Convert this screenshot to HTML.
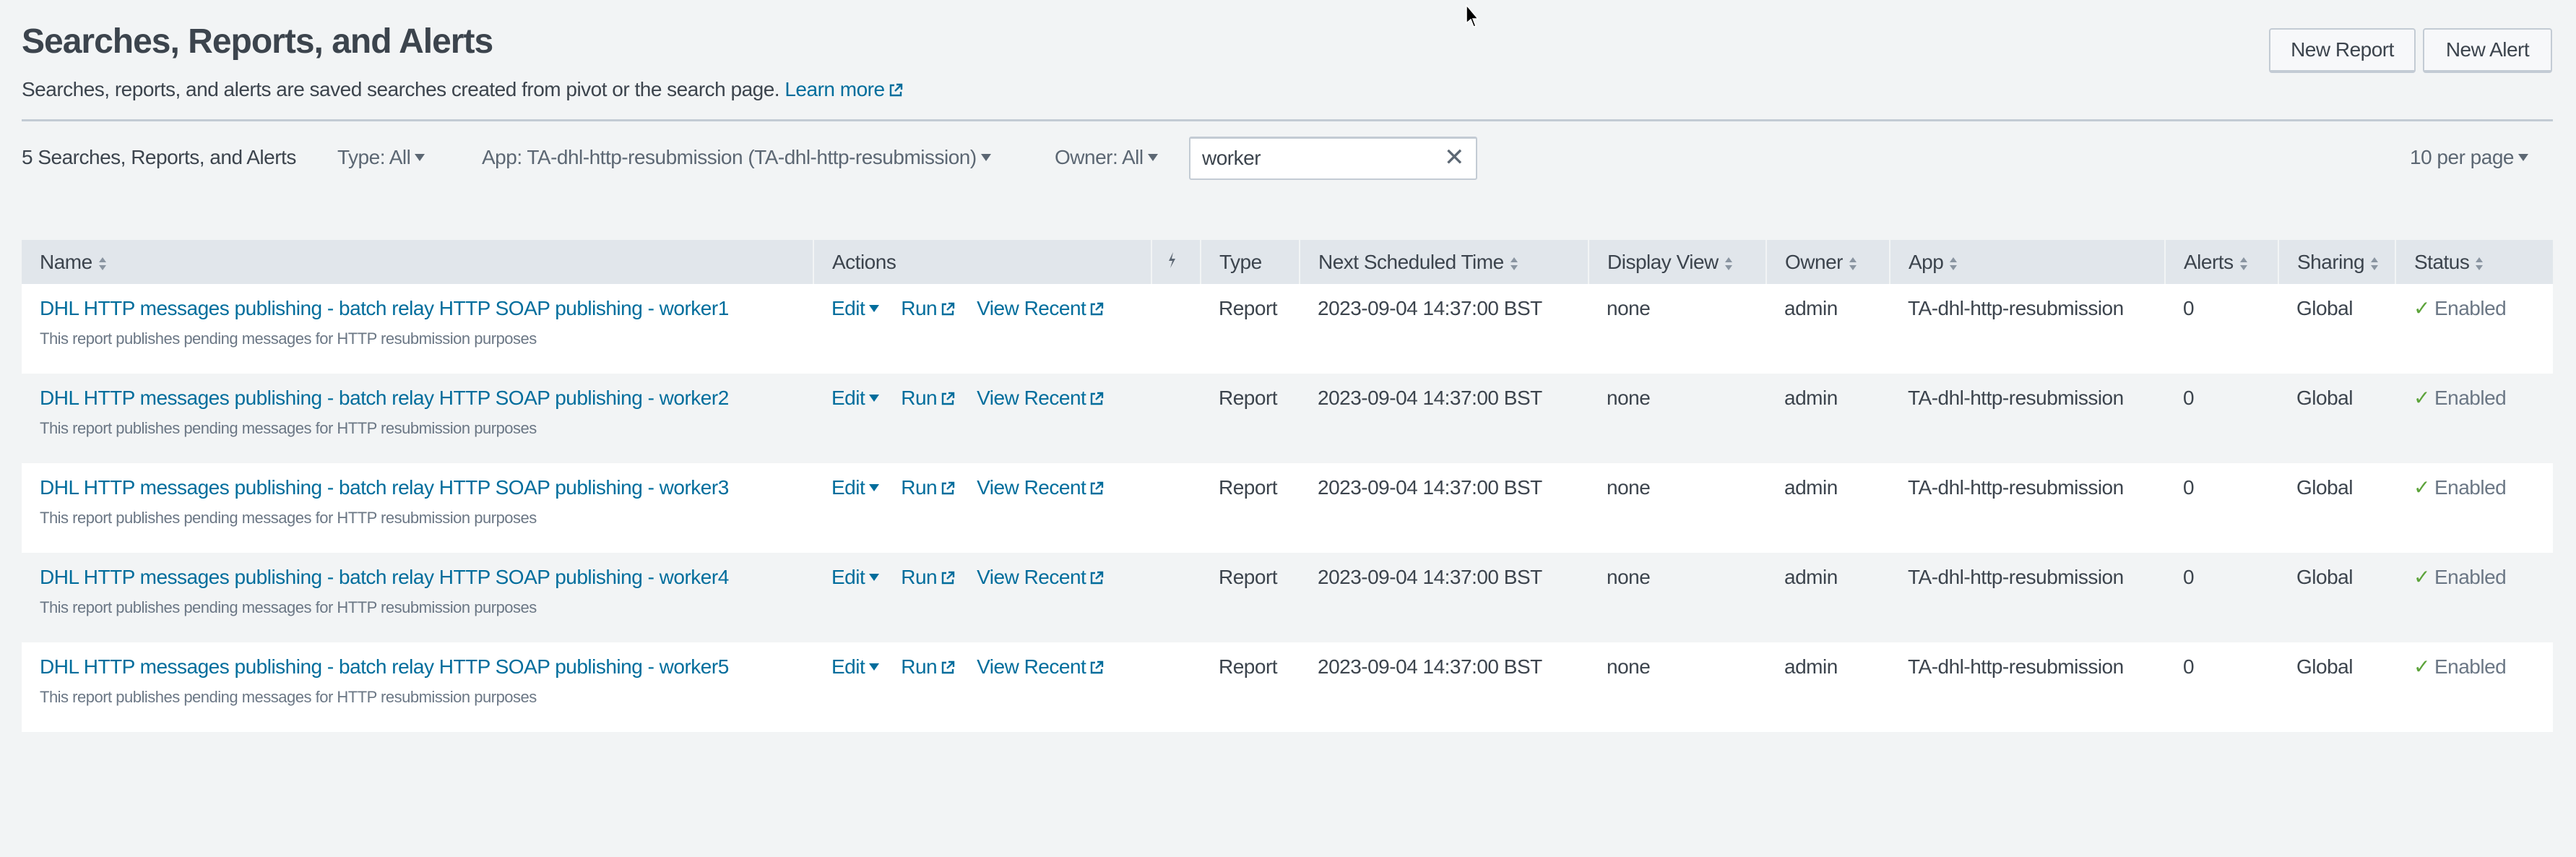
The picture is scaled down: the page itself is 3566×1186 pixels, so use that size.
<!DOCTYPE html>
<html><head><meta charset="utf-8"><style>
*{box-sizing:border-box;margin:0;padding:0}
body{width:3566px;height:1186px;background:#f2f4f5;font-family:"Liberation Sans",sans-serif;color:#3c444d;position:relative;overflow:hidden;font-size:28px;letter-spacing:-0.5px}
.abs{position:absolute;white-space:nowrap}
h1{position:absolute;left:30px;top:30px;font-size:48px;font-weight:bold;color:#3c444d;letter-spacing:-1px}
a{color:#006d9c;text-decoration:none}
.ext{display:inline-block;width:20px;height:20px;vertical-align:-2px;margin-left:5px}
.btn{position:absolute;top:39px;height:62px;border:2px solid #c3cbd4;border-bottom-width:4px;border-radius:4px;background:#f7f8fa;font-size:28px;color:#3c444d;line-height:56px;text-align:center}
.caret{display:inline-block;width:0;height:0;border-left:7px solid transparent;border-right:7px solid transparent;border-top:10px solid currentColor;vertical-align:4px;margin-left:6px}
table{position:absolute;left:30px;top:332px;width:3504px;border-collapse:collapse;table-layout:fixed}
th{background:#e1e6eb;height:61px;text-align:left;font-weight:normal;padding-left:25px;border-left:2px solid #f2f4f5;font-size:28px;color:#3c444d}
th:first-child{border-left:none}
td{height:124px;vertical-align:top;padding:18px 0 0 25px;line-height:32px;white-space:nowrap}
tr.w td{background:#fff}
tr.g td{background:#f2f4f5}
.desc{font-size:22px;color:#6b7785;margin-top:10px;display:block}
.sort{display:inline-block;width:12px;height:20px;vertical-align:-3px;margin-left:8px}
.act a{margin-right:30px}
.ok{color:#5ca33a;font-size:28px;margin-right:6px}
.en{color:#6b7785}
</style></head><body>
<svg width="0" height="0" style="position:absolute"><defs>
<symbol id="ex" viewBox="0 0 20 20"><path d="M8 3H3v14h14v-5" fill="none" stroke="currentColor" stroke-width="2.4"/><path d="M11 2h7v7M18 2L9 11" fill="none" stroke="currentColor" stroke-width="2.4"/></symbol>
<symbol id="so" viewBox="0 0 12 20"><path d="M6 1L11 8H1z M6 19L11 12H1z" fill="#8a95a1"/></symbol>
</defs></svg>
<h1>Searches, Reports, and Alerts</h1>
<div class="abs" style="left:30px;top:108px;font-size:28px">Searches, reports, and alerts are saved searches created from pivot or the search page. <a href="#">Learn more<svg class="ext"><use href="#ex"/></svg></a></div>
<div class="btn" style="left:3141px;width:203px">New Report</div>
<div class="btn" style="left:3354px;width:179px">New Alert</div>
<div class="abs" style="left:30px;top:165px;width:3504px;height:3px;background:#c3cbd4"></div>
<div class="abs" style="left:30px;top:202px">5 Searches, Reports, and Alerts</div>
<div class="abs" style="left:467px;top:202px;color:#5c6773">Type: All<span class="caret"></span></div>
<div class="abs" style="left:667px;top:202px;color:#5c6773">App: TA-dhl-http-resubmission (TA-dhl-http-resubmission)<span class="caret"></span></div>
<div class="abs" style="left:1460px;top:202px;color:#5c6773">Owner: All<span class="caret"></span></div>
<div class="abs" style="left:1646px;top:189px;width:399px;height:60px;background:#fff;border:2px solid #c3cbd4;border-top-width:3px;border-radius:3px;padding:11px 0 0 16px;color:#3c444d">worker<span style="position:absolute;right:16px;top:6px;font-size:34px;color:#5c6773">✕</span></div>
<div class="abs" style="left:3336px;top:202px;color:#5c6773">10 per page<span class="caret"></span></div>
<div class="abs" style="left:2029px;top:6px;width:0;height:0;border-left:0 solid transparent;"></div>
<svg class="abs" style="left:2028px;top:6px" width="20" height="34" viewBox="0 0 20 34"><path d="M2 1L2 26L8 21L12 31L15 30L11 20L18 20Z" fill="#000" stroke="#fff" stroke-width="1.5"/></svg>
<table>
<colgroup><col style="width:1096px"><col style="width:468px"><col style="width:68px"><col style="width:137px"><col style="width:400px"><col style="width:246px"><col style="width:171px"><col style="width:381px"><col style="width:157px"><col style="width:162px"><col style="width:218px"></colgroup>
<tr><th>Name<svg class="sort"><use href="#so"/></svg></th><th>Actions</th><th style="padding-left:20px"><svg width="14" height="24" viewBox="0 0 14 24"><path d="M9 1L3 13h5L5 23l7-13H7z" fill="#5c6773"/></svg></th><th>Type</th><th>Next Scheduled Time<svg class="sort"><use href="#so"/></svg></th><th>Display View<svg class="sort"><use href="#so"/></svg></th><th>Owner<svg class="sort"><use href="#so"/></svg></th><th>App<svg class="sort"><use href="#so"/></svg></th><th>Alerts<svg class="sort"><use href="#so"/></svg></th><th>Sharing<svg class="sort"><use href="#so"/></svg></th><th>Status<svg class="sort"><use href="#so"/></svg></th></tr>
<tr class="w"><td><a href="#">DHL HTTP messages publishing - batch relay HTTP SOAP publishing - worker1</a><span class="desc">This report publishes pending messages for HTTP resubmission purposes</span></td><td class="act"><a href="#">Edit<span class="caret"></span></a><a href="#">Run<svg class="ext"><use href="#ex"/></svg></a><a href="#">View Recent<svg class="ext"><use href="#ex"/></svg></a></td><td></td><td>Report</td><td>2023-09-04 14:37:00 BST</td><td>none</td><td>admin</td><td>TA-dhl-http-resubmission</td><td>0</td><td>Global</td><td><span class="ok">✓</span><span class="en">Enabled</span></td></tr>
<tr class="g"><td><a href="#">DHL HTTP messages publishing - batch relay HTTP SOAP publishing - worker2</a><span class="desc">This report publishes pending messages for HTTP resubmission purposes</span></td><td class="act"><a href="#">Edit<span class="caret"></span></a><a href="#">Run<svg class="ext"><use href="#ex"/></svg></a><a href="#">View Recent<svg class="ext"><use href="#ex"/></svg></a></td><td></td><td>Report</td><td>2023-09-04 14:37:00 BST</td><td>none</td><td>admin</td><td>TA-dhl-http-resubmission</td><td>0</td><td>Global</td><td><span class="ok">✓</span><span class="en">Enabled</span></td></tr>
<tr class="w"><td><a href="#">DHL HTTP messages publishing - batch relay HTTP SOAP publishing - worker3</a><span class="desc">This report publishes pending messages for HTTP resubmission purposes</span></td><td class="act"><a href="#">Edit<span class="caret"></span></a><a href="#">Run<svg class="ext"><use href="#ex"/></svg></a><a href="#">View Recent<svg class="ext"><use href="#ex"/></svg></a></td><td></td><td>Report</td><td>2023-09-04 14:37:00 BST</td><td>none</td><td>admin</td><td>TA-dhl-http-resubmission</td><td>0</td><td>Global</td><td><span class="ok">✓</span><span class="en">Enabled</span></td></tr>
<tr class="g"><td><a href="#">DHL HTTP messages publishing - batch relay HTTP SOAP publishing - worker4</a><span class="desc">This report publishes pending messages for HTTP resubmission purposes</span></td><td class="act"><a href="#">Edit<span class="caret"></span></a><a href="#">Run<svg class="ext"><use href="#ex"/></svg></a><a href="#">View Recent<svg class="ext"><use href="#ex"/></svg></a></td><td></td><td>Report</td><td>2023-09-04 14:37:00 BST</td><td>none</td><td>admin</td><td>TA-dhl-http-resubmission</td><td>0</td><td>Global</td><td><span class="ok">✓</span><span class="en">Enabled</span></td></tr>
<tr class="w"><td><a href="#">DHL HTTP messages publishing - batch relay HTTP SOAP publishing - worker5</a><span class="desc">This report publishes pending messages for HTTP resubmission purposes</span></td><td class="act"><a href="#">Edit<span class="caret"></span></a><a href="#">Run<svg class="ext"><use href="#ex"/></svg></a><a href="#">View Recent<svg class="ext"><use href="#ex"/></svg></a></td><td></td><td>Report</td><td>2023-09-04 14:37:00 BST</td><td>none</td><td>admin</td><td>TA-dhl-http-resubmission</td><td>0</td><td>Global</td><td><span class="ok">✓</span><span class="en">Enabled</span></td></tr>
</table>
</body></html>
